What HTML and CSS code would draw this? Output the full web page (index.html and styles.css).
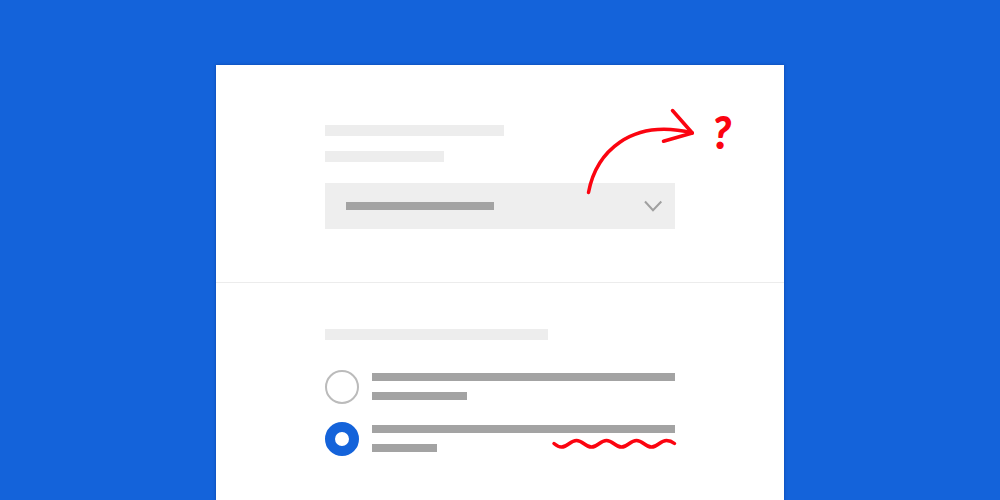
FILE: index.html
```html
<!DOCTYPE html>
<html lang="en">
<head>
<meta charset="utf-8">
<meta name="viewport" content="width=device-width, initial-scale=1">
<title>Form wireframe</title>
<link rel="stylesheet" href="styles.css">
</head>
<body>
<main class="card">
  <section class="section section-select">
    <label class="heading" for="choice" aria-label="Choice">
      <span class="bar bar-light w-title"></span>
      <span class="bar bar-light w-subtitle"></span>
    </label>
    <div class="select-box">
      <select class="select" id="choice"><option label=" "></option></select>
      <span class="bar bar-dark w-value"></span>
      <svg class="chevron" viewBox="0 0 20 12" aria-hidden="true"><path d="M2 1.5 10 10.2 18.3 1.5"/></svg>
    </div>
    <svg class="note note-arrow" viewBox="0 0 220 140" aria-hidden="true">
      <path d="M24.5 127.5C32 88 66 53 128.300 68"/>
      <path d="M108.500 45.500 128.300 68 99.500 76.300"/>
      <text class="question" x="149" y="83">?</text>
    </svg>
  </section>
  <fieldset class="section section-radio">
    <legend class="legend" aria-label="Options"><span class="bar bar-light w-group"></span></legend>
    <div class="options">
      <label class="option">
        <input class="radio" type="radio" name="option" aria-label="First option">
        <span class="lines"><span class="bar bar-dark"></span><span class="bar bar-dark w-short"></span></span>
      </label>
      <label class="option">
        <input class="radio" type="radio" name="option" aria-label="Second option" checked>
        <span class="lines"><span class="bar bar-dark"></span><span class="bar bar-dark w-shorter"></span></span>
        <svg class="note note-wave" viewBox="0 0 126 12" aria-hidden="true">
          <path d="M3 5.500C6 8 8 9 10.500 9C17 9 19 2.500 25.500 2.500S34 9 40.500 9S49 2.500 55.500 2.500S64 9 70.500 9S79 2.500 85.500 2.500S94 9 100.500 9S109 2.500 115.500 2.500C118 2.500 121 3.500 123.500 5.500"/>
        </svg>
      </label>
    </div>
  </fieldset>
</main>
</body>
</html>
```
FILE: styles.css
```css
* { box-sizing: border-box; }

body {
  margin: 0;
  min-height: 100vh;
  padding: 65px 16px 0;
  display: flex;
  justify-content: center;
  background: #1463da;
  font-family: "Liberation Sans", Arial, sans-serif;
}

.card {
  width: 100%;
  max-width: 568px;
  background: #fff;
  box-shadow: 0 0 3px rgba(0, 30, 100, 0.4);
}

.section {
  position: relative;
  margin: 0;
  min-width: 0;
  border: 0;
  padding: 0 109px;
}

.section-select {
  padding-top: 60px;
  padding-bottom: 53px;
  border-bottom: 1px solid #ececec;
}

.section-radio { padding-bottom: 45px; }

.bar { display: block; max-width: 100%; }
.bar-light { height: 11px; background: #ededed; }
.bar-dark { height: 8px; background: #a3a3a3; }

.w-title { width: 179px; }
.w-subtitle { width: 119px; }
.w-value { width: 148px; }
.w-group { width: 223px; }
.w-short { width: 95px; }
.w-shorter { width: 65px; }

.heading { display: grid; gap: 15px; margin-bottom: 21px; }

.select-box {
  display: grid;
  grid-template-columns: 1fr auto;
  align-items: center;
  height: 46px;
}

.select-box > * { grid-row: 1; }

.select {
  grid-column: 1 / -1;
  width: 100%;
  height: 100%;
  appearance: none;
  border: 0;
  border-radius: 0;
  background: #eee;
}

.select-box .bar { grid-column: 1; margin-left: 21px; pointer-events: none; }

.chevron {
  grid-column: 2;
  width: 20px;
  height: 12px;
  margin-right: 12px;
  fill: none;
  stroke: #a0a0a0;
  stroke-width: 2;
  pointer-events: none;
}

.legend { display: block; width: 100%; padding: 46px 0 30px; }

.options { display: grid; gap: 18px; }

.option { position: relative; display: flex; gap: 13px; }

.radio {
  flex: none;
  appearance: none;
  width: 34px;
  height: 34px;
  margin: 0;
  border: 2px solid #bbb;
  border-radius: 50%;
  background: #fff;
}

.radio:checked { border: 10px solid #1463da; }

.lines { flex: 1; display: grid; align-content: start; gap: 11px; padding-top: 3px; }

.note {
  position: absolute;
  fill: none;
  stroke: #fb0410;
  stroke-width: 3.5;
  stroke-linecap: round;
  stroke-linejoin: round;
  pointer-events: none;
}

.note-arrow { top: 0; right: 0; width: 220px; height: 140px; }
.note-wave { top: 16px; right: -2px; width: 126px; height: 12px; }

.question {
  font: italic 400 42px Lato, sans-serif;
  fill: #fb0410;
  stroke-width: 2;
}
```
